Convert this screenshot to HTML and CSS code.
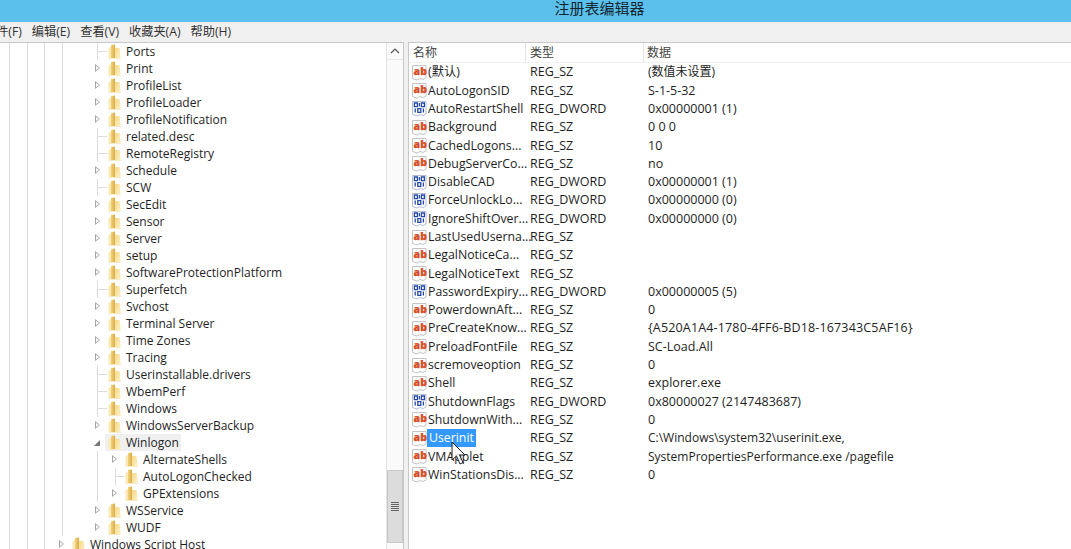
FILE: index.html
```html
<!DOCTYPE html>
<html lang="zh-CN">
<head>
<meta charset="utf-8">
<title>注册表编辑器</title>
<link rel="stylesheet" href="styles.css">
</head>
<body>
<svg class="defs" width="0" height="0" aria-hidden="true">
  <defs>
    <linearGradient id="fg" x1="0" y1="0" x2="1" y2="1">
      <stop offset="0" stop-color="#f5d884"/>
      <stop offset="1" stop-color="#fdf3c8"/>
    </linearGradient>
    <linearGradient id="bk" x1="0" y1="0" x2="1" y2="0">
      <stop offset="0" stop-color="#f2d27a"/>
      <stop offset="1" stop-color="#d6a843"/>
    </linearGradient>
    <symbol id="folder" viewBox="0 0 13 15">
      <path d="M0.5 4 L3 3 V14 H0.5 Z" fill="#f9e9b4"/>
      <path d="M3 1 L7 0.5 L7.6 14.5 H3 Z" fill="url(#bk)"/>
      <path d="M7.2 4 H11.5 L12.8 14.5 H7.2 Z" fill="url(#fg)"/>
      <path d="M0.5 14 H12.8 V15 H0.5Z" fill="#f6eaca"/>
    </symbol>
    <symbol id="ab" viewBox="0 0 15 17">
      <path d="M0.5 1.5 H14 V14 L11 15.5 L8 14.5 L5 16 L0.5 14.5 Z" fill="#fff" stroke="#c4c4c4"/>
      <text x="1.6" y="10.8" class="abtext">ab</text>
    </symbol>
    <symbol id="bin" viewBox="0 0 15 17">
      <path d="M0.5 1.5 H14 V14 L11 15.5 L8 14.5 L5 16 L0.5 14.5 Z" fill="#fff" stroke="#b3bdd4"/>
      <path d="M2.4 3 h3 v3.6 h-3z M7.4 3 v3.6 M9.4 3 h3 v3.6 h-3z M3.2 8.6 v3.8 M5.8 8.6 h3 v3.8 h-3z M11.4 8.6 v3.8" fill="none" stroke="#2448a6" stroke-width="1.3"/>
    </symbol>
  </defs>
</svg>

<header class="titlebar"><span class="title">注册表编辑器</span></header>

<nav class="menubar">
  <span>文件(F)</span><span>编辑(E)</span><span>查看(V)</span><span>收藏夹(A)</span><span>帮助(H)</span>
</nav>

<main class="panes">
  <section class="treepane">
    <div class="tree">
      <div class="group">
        <div class="row"><i class="twist leaf"></i><svg class="fold"><use href="#folder"/></svg><span class="lbl">Ports</span></div>
        <div class="row"><i class="twist"></i><svg class="fold"><use href="#folder"/></svg><span class="lbl">Print</span></div>
        <div class="row"><i class="twist"></i><svg class="fold"><use href="#folder"/></svg><span class="lbl">ProfileList</span></div>
        <div class="row"><i class="twist"></i><svg class="fold"><use href="#folder"/></svg><span class="lbl">ProfileLoader</span></div>
        <div class="row"><i class="twist"></i><svg class="fold"><use href="#folder"/></svg><span class="lbl">ProfileNotification</span></div>
        <div class="row"><i class="twist leaf"></i><svg class="fold"><use href="#folder"/></svg><span class="lbl">related.desc</span></div>
        <div class="row"><i class="twist leaf"></i><svg class="fold"><use href="#folder"/></svg><span class="lbl">RemoteRegistry</span></div>
        <div class="row"><i class="twist"></i><svg class="fold"><use href="#folder"/></svg><span class="lbl">Schedule</span></div>
        <div class="row"><i class="twist leaf"></i><svg class="fold"><use href="#folder"/></svg><span class="lbl">SCW</span></div>
        <div class="row"><i class="twist"></i><svg class="fold"><use href="#folder"/></svg><span class="lbl">SecEdit</span></div>
        <div class="row"><i class="twist"></i><svg class="fold"><use href="#folder"/></svg><span class="lbl">Sensor</span></div>
        <div class="row"><i class="twist"></i><svg class="fold"><use href="#folder"/></svg><span class="lbl">Server</span></div>
        <div class="row"><i class="twist"></i><svg class="fold"><use href="#folder"/></svg><span class="lbl">setup</span></div>
        <div class="row"><i class="twist"></i><svg class="fold"><use href="#folder"/></svg><span class="lbl">SoftwareProtectionPlatform</span></div>
        <div class="row"><i class="twist leaf"></i><svg class="fold"><use href="#folder"/></svg><span class="lbl">Superfetch</span></div>
        <div class="row"><i class="twist"></i><svg class="fold"><use href="#folder"/></svg><span class="lbl">Svchost</span></div>
        <div class="row"><i class="twist"></i><svg class="fold"><use href="#folder"/></svg><span class="lbl">Terminal Server</span></div>
        <div class="row"><i class="twist"></i><svg class="fold"><use href="#folder"/></svg><span class="lbl">Time Zones</span></div>
        <div class="row"><i class="twist"></i><svg class="fold"><use href="#folder"/></svg><span class="lbl">Tracing</span></div>
        <div class="row"><i class="twist leaf"></i><svg class="fold"><use href="#folder"/></svg><span class="lbl">Userinstallable.drivers</span></div>
        <div class="row"><i class="twist leaf"></i><svg class="fold"><use href="#folder"/></svg><span class="lbl">WbemPerf</span></div>
        <div class="row"><i class="twist leaf"></i><svg class="fold"><use href="#folder"/></svg><span class="lbl">Windows</span></div>
        <div class="row"><i class="twist"></i><svg class="fold"><use href="#folder"/></svg><span class="lbl">WindowsServerBackup</span></div>
        <div class="row current"><i class="twist open"></i><svg class="fold"><use href="#folder"/></svg><span class="lbl">Winlogon</span></div>
        <div class="group sub">
          <div class="row"><i class="twist"></i><svg class="fold"><use href="#folder"/></svg><span class="lbl">AlternateShells</span></div>
          <div class="row"><i class="twist leaf"></i><svg class="fold"><use href="#folder"/></svg><span class="lbl">AutoLogonChecked</span></div>
          <div class="row"><i class="twist"></i><svg class="fold"><use href="#folder"/></svg><span class="lbl">GPExtensions</span></div>
        </div>
        <div class="row"><i class="twist"></i><svg class="fold"><use href="#folder"/></svg><span class="lbl">WSService</span></div>
        <div class="row"><i class="twist"></i><svg class="fold"><use href="#folder"/></svg><span class="lbl">WUDF</span></div>
      </div>
      <div class="row top"><i class="twist"></i><svg class="fold"><use href="#folder"/></svg><span class="lbl">Windows Script Host</span></div>
    </div>
    <div class="vbar">
      <div class="vbtn"><svg width="10" height="6" viewBox="0 0 10 6"><path d="M1 5 L5 1 L9 5" fill="none" stroke="#555" stroke-width="1.2"/></svg></div>
      <div class="vtrack"></div>
      <div class="vthumb"><span class="grip"></span></div>
    </div>
  </section>

  <section class="listpane">
    <div class="lhead"><span class="c1">名称</span><span class="c2">类型</span><span class="c3">数据</span></div>
    <div class="lrows">
      <div class="lrow"><svg class="ic"><use href="#ab"/></svg><span class="c1n">(默认)</span><span class="c2">REG_SZ</span><span class="c3 tight">(数值未设置)</span></div>
      <div class="lrow"><svg class="ic"><use href="#ab"/></svg><span class="c1n">AutoLogonSID</span><span class="c2">REG_SZ</span><span class="c3">S-1-5-32</span></div>
      <div class="lrow"><svg class="ic"><use href="#bin"/></svg><span class="c1n">AutoRestartShell</span><span class="c2">REG_DWORD</span><span class="c3">0x00000001 (1)</span></div>
      <div class="lrow"><svg class="ic"><use href="#ab"/></svg><span class="c1n">Background</span><span class="c2">REG_SZ</span><span class="c3">0 0 0</span></div>
      <div class="lrow"><svg class="ic"><use href="#ab"/></svg><span class="c1n">CachedLogons...</span><span class="c2">REG_SZ</span><span class="c3">10</span></div>
      <div class="lrow"><svg class="ic"><use href="#ab"/></svg><span class="c1n">DebugServerCo...</span><span class="c2">REG_SZ</span><span class="c3">no</span></div>
      <div class="lrow"><svg class="ic"><use href="#bin"/></svg><span class="c1n">DisableCAD</span><span class="c2">REG_DWORD</span><span class="c3">0x00000001 (1)</span></div>
      <div class="lrow"><svg class="ic"><use href="#bin"/></svg><span class="c1n">ForceUnlockLo...</span><span class="c2">REG_DWORD</span><span class="c3">0x00000000 (0)</span></div>
      <div class="lrow"><svg class="ic"><use href="#bin"/></svg><span class="c1n">IgnoreShiftOver...</span><span class="c2">REG_DWORD</span><span class="c3">0x00000000 (0)</span></div>
      <div class="lrow"><svg class="ic"><use href="#ab"/></svg><span class="c1n">LastUsedUserna...</span><span class="c2">REG_SZ</span><span class="c3"></span></div>
      <div class="lrow"><svg class="ic"><use href="#ab"/></svg><span class="c1n">LegalNoticeCa...</span><span class="c2">REG_SZ</span><span class="c3"></span></div>
      <div class="lrow"><svg class="ic"><use href="#ab"/></svg><span class="c1n">LegalNoticeText</span><span class="c2">REG_SZ</span><span class="c3"></span></div>
      <div class="lrow"><svg class="ic"><use href="#bin"/></svg><span class="c1n">PasswordExpiry...</span><span class="c2">REG_DWORD</span><span class="c3">0x00000005 (5)</span></div>
      <div class="lrow"><svg class="ic"><use href="#ab"/></svg><span class="c1n">PowerdownAft...</span><span class="c2">REG_SZ</span><span class="c3">0</span></div>
      <div class="lrow"><svg class="ic"><use href="#ab"/></svg><span class="c1n">PreCreateKnow...</span><span class="c2">REG_SZ</span><span class="c3 guid">{A520A1A4-1780-4FF6-BD18-167343C5AF16}</span></div>
      <div class="lrow"><svg class="ic"><use href="#ab"/></svg><span class="c1n">PreloadFontFile</span><span class="c2">REG_SZ</span><span class="c3">SC-Load.All</span></div>
      <div class="lrow"><svg class="ic"><use href="#ab"/></svg><span class="c1n">scremoveoption</span><span class="c2">REG_SZ</span><span class="c3">0</span></div>
      <div class="lrow"><svg class="ic"><use href="#ab"/></svg><span class="c1n">Shell</span><span class="c2">REG_SZ</span><span class="c3">explorer.exe</span></div>
      <div class="lrow"><svg class="ic"><use href="#bin"/></svg><span class="c1n">ShutdownFlags</span><span class="c2">REG_DWORD</span><span class="c3">0x80000027 (2147483687)</span></div>
      <div class="lrow"><svg class="ic"><use href="#ab"/></svg><span class="c1n">ShutdownWith...</span><span class="c2">REG_SZ</span><span class="c3">0</span></div>
      <div class="lrow"><svg class="ic"><use href="#ab"/></svg><span class="c1n"><span class="sel">Userinit</span></span><span class="c2">REG_SZ</span><span class="c3 tight">C:\Windows\system32\userinit.exe,</span></div>
      <div class="lrow"><svg class="ic"><use href="#ab"/></svg><span class="c1n">VMApplet</span><span class="c2">REG_SZ</span><span class="c3 tight">SystemPropertiesPerformance.exe /pagefile</span></div>
      <div class="lrow"><svg class="ic"><use href="#ab"/></svg><span class="c1n">WinStationsDis...</span><span class="c2">REG_SZ</span><span class="c3">0</span></div>
    </div>
    <svg class="cursor" width="20" height="28" viewBox="0 0 20 28"><path d="M1 1 V19 L5.5 15 L9 23 L12 21.5 L8.5 14 H14 Z" fill="#fff" fill-opacity=".8" stroke="#222" stroke-width="1"/></svg>
  </section>
</main>
</body>
</html>
```
FILE: styles.css
```css
* { box-sizing: border-box; }
html, body { margin: 0; height: 100%; overflow: hidden; }
body {
  display: flex;
  flex-direction: column;
  background: #f0f0f0;
  color: #1e1e1e;
  font: 12px/17px "Open Sans", "Noto Sans CJK SC", sans-serif;
}
.defs { position: absolute; }
.abtext { font: 800 10.5px "Open Sans", sans-serif; fill: #d8502a; stroke: #d8502a; stroke-width: .25; }

.titlebar {
  height: 22px;
  flex: none;
  background: #5bc1ec;
  text-align: center;
}
.title {
  font-size: 15px;
  line-height: 17px;
  color: #14262f;
  position: relative;
  left: 64px;
}

.menubar {
  height: 19px;
  flex: none;
  display: flex;
  gap: 10px;
  margin-left: -16px;
  padding-top: 1px;
  white-space: nowrap;
  color: #333;
  font-size: 12.2px;
}

.panes { flex: 1; display: flex; min-height: 0; gap: 4px; padding-top: 1px; }

.treepane {
  width: 404px;
  flex: none;
  display: flex;
  background: #fff;
  border-top: 1px solid #c8c8c8;
  border-right: 1px solid #c8c8c8;
  overflow: hidden;
}
.tree {
  flex: 1;
  min-width: 0;
  overflow: hidden;
  background:
    linear-gradient(#dcdcdc, #dcdcdc) 9px 0 / 1px 100% no-repeat,
    linear-gradient(#dcdcdc, #dcdcdc) 27px 0 / 1px 100% no-repeat,
    linear-gradient(#dcdcdc, #dcdcdc) 44px 0 / 1px 100% no-repeat,
    linear-gradient(#dcdcdc, #dcdcdc) 62px 0 / 1px 100% no-repeat;
}
.group {
  margin-left: 97px;
  border-left: 1px solid #dcdcdc;
}
.group.sub {
  margin-left: 17px;
  height: 51px;
  background: linear-gradient(#dcdcdc, #dcdcdc) 0 0 / 1px 42px no-repeat;
  border-left: 0;
}
.row {
  display: flex;
  align-items: center;
  height: 17px;
  margin-left: -6px;
  white-space: nowrap;
}
.row.top { margin-left: 56px; background: #fff; }
.fold { width: 13px; height: 15px; margin-left: 4px; flex: none; }
.lbl { margin-left: 5px; }
.twist {
  width: 12px;
  height: 17px;
  flex: none;
  position: relative;
  background: #fff;
}
.twist::before {
  content: "";
  position: absolute;
  left: 3px;
  top: 4px;
  border-style: solid;
  border-width: 4.5px 0 4.5px 5px;
  border-color: transparent transparent transparent #a6a6a6;
}
.twist::after {
  content: "";
  position: absolute;
  left: 4px;
  top: 6px;
  border-style: solid;
  border-width: 2.5px 0 2.5px 3px;
  border-color: transparent transparent transparent #fff;
}
.twist.leaf { background: transparent; }
.twist.leaf::before { border: 0; background: #dcdcdc; width: 9px; height: 1px; left: 6px; top: 8px; }
.twist.leaf::after { display: none; }
.twist.open::before {
  left: 2px; top: 6px;
  border-width: 0 0 6px 6px;
  border-color: transparent transparent #777 transparent;
}
.twist.open::after { display: none; }
.row.current { width: 89px; background: linear-gradient(90deg, transparent 13px, #f0f0f0 13px); }

.vbar {
  width: 17px;
  flex: none;
  background: #fafafa;
  border-left: 1px solid #e4e4e4;
  display: flex;
  flex-direction: column;
}
.vbtn { height: 17px; flex: none; display: flex; align-items: center; justify-content: center; border-bottom: 1px solid #e8e8e8; }
.vtrack { height: 410px; flex: none; }
.vthumb {
  height: 73px;
  flex: none;
  background: #dcdcdc;
  border: 1px solid #c8c8c8;
  display: flex;
  align-items: center;
  justify-content: center;
}
.grip {
  width: 8px; height: 9px;
  background: repeating-linear-gradient(#666 0 1px, #dcdcdc 1px 2px);
}

.listpane {
  flex: 1;
  min-width: 0;
  background: #fff;
  border-top: 1px solid #c8c8c8;
  border-left: 1px solid #c8c8c8;
  position: relative;
  overflow: hidden;
}
.lhead {
  height: 20px;
  display: flex;
  border-bottom: 1px solid #f0f0f0;
  line-height: 20px;
  color: #444;
}
.lhead .c1 { width: 117px; padding-left: 4px; border-right: 1px solid #e4e4e4; }
.lhead .c2 { width: 118px; padding-left: 4px; border-right: 1px solid #e4e4e4; }
.lhead .c3 { padding-left: 3px; }
.lrows { padding-top: .2px; }
.lrow {
  height: 18.3px;
  display: flex;
  align-items: center;
  white-space: nowrap;
  line-height: 16px;
}
.ic { width: 15px; height: 17px; margin-left: 3px; flex: none; }
.c1n { width: 103px; flex: none; padding-left: 1px; font-size: 12.3px; }
.sel { background: #3399ff; color: #fff; padding: 0 2px; margin-left: -1px; display: inline-block; line-height: 18px; }
.lrow .c2 { width: 118px; flex: none; font-size: 12.5px; }
.lrow .c3 { font-size: 12.5px; }
.lrow .c3.tight { font-size: 12px; }
.lrow .c3.guid { letter-spacing: .16px; }
.cursor { position: absolute; left: 42px; top: 398px; }
```
